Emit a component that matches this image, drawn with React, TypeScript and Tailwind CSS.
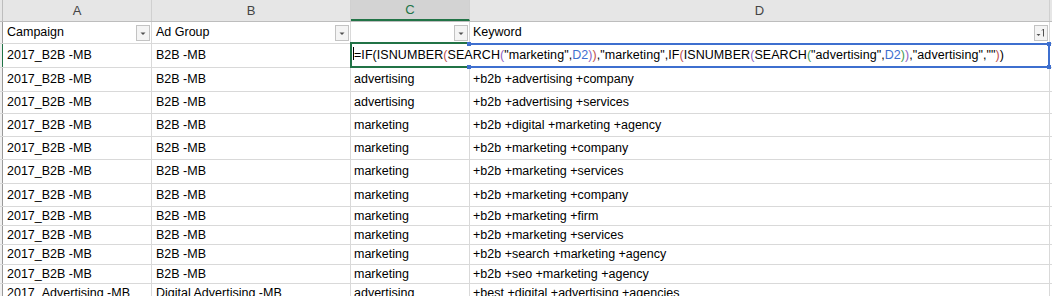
import React from "react";

type Row = { h: string; a: string; b: string; c: string; d: string };

const rows: Row[] = [
  { h: "h-[24px]", a: "2017_B2B -MB", b: "B2B -MB", c: "advertising", d: "+b2b +advertising +company" },
  { h: "h-[22px]", a: "2017_B2B -MB", b: "B2B -MB", c: "advertising", d: "+b2b +advertising +services" },
  { h: "h-[23px]", a: "2017_B2B -MB", b: "B2B -MB", c: "marketing", d: "+b2b +digital +marketing +agency" },
  { h: "h-[23px]", a: "2017_B2B -MB", b: "B2B -MB", c: "marketing", d: "+b2b +marketing +company" },
  { h: "h-[24px]", a: "2017_B2B -MB", b: "B2B -MB", c: "marketing", d: "+b2b +marketing +services" },
  { h: "h-[23px]", a: "2017_B2B -MB", b: "B2B -MB", c: "marketing", d: "+b2b +marketing +company" },
  { h: "h-[19px]", a: "2017_B2B -MB", b: "B2B -MB", c: "marketing", d: "+b2b +marketing +firm" },
  { h: "h-[19px]", a: "2017_B2B -MB", b: "B2B -MB", c: "marketing", d: "+b2b +marketing +services" },
  { h: "h-[20px]", a: "2017_B2B -MB", b: "B2B -MB", c: "marketing", d: "+b2b +search +marketing +agency" },
  { h: "h-[19px]", a: "2017_B2B -MB", b: "B2B -MB", c: "marketing", d: "+b2b +seo +marketing +agency" },
  { h: "h-[19px]", a: "2017_Advertising -MB", b: "Digital Advertising -MB", c: "advertising", d: "+best +digital +advertising +agencies" },
];

function FilterBtn({ sort = false }: { sort?: boolean }) {
  return (
    <div className="w-[14px] h-[16px] shrink-0 border border-[#c3c3c3] bg-[#f4f4f4] flex items-center justify-center">
      <svg width="12" height="14" viewBox="0 0 12 14">
        {sort ? (
          <>
            <path d="M1.5 8 L5.5 8 L3.5 10 Z" fill="#505050" />
            <path d="M8.5 10.5 V3 M7 4.5 L8.5 3" stroke="#505050" strokeWidth="1" fill="none" />
          </>
        ) : (
          <path d="M3.5 6.5 L8.5 6.5 L6 9 Z" fill="#505050" />
        )}
      </svg>
    </div>
  );
}

const P = ({ c, v }: { c: string; v: string }) => <span className={c}>{v}</span>;

function Formula() {
  const red = "text-[#c0504d]";
  const pur = "text-[#8f5fbf]";
  const grn = "text-[#3d9a52]";
  const blu = "text-[#3e6fcf]";
  return (
    <span className="relative whitespace-nowrap tracking-[0.06px]">
      <span className="absolute left-[-1px] top-[1px] w-px h-[13px] bg-black" />
      =IF(ISNUMBER<P c={red} v="(" />SEARCH<P c={pur} v="(" />"marketing",<P c={blu} v="D2" />
      <P c={pur} v=")" />
      <P c={red} v=")" />,"marketing",IF<P c={red} v="(" />ISNUMBER<P c={pur} v="(" />SEARCH
      <P c={grn} v="(" />"advertising",<P c={blu} v="D2" />
      <P c={grn} v=")" />
      <P c={pur} v=")" />,"advertising",""<P c={red} v=")" />)
    </span>
  );
}

export default function App() {
  const cell = "h-full flex items-center border-r border-[#d9d9d9] whitespace-nowrap overflow-hidden";
  return (
    <div
      className="w-[1052px] h-[296px] overflow-hidden bg-white text-black text-[12.5px] relative"
      style={{ fontFamily: '"Liberation Sans", Arial, sans-serif' }}
    >
      {/* Column headers */}
      <div className="flex h-[22px] bg-[#e6e6e6] border-b border-[#bdbdbd] text-[#444] text-[13px]">
        <div className="w-[3px] h-full border-r border-[#bdbdbd]" />
        <div className="w-[149px] h-full flex items-center justify-center border-r border-[#d0d0d0]">A</div>
        <div className="w-[199px] h-full flex items-center justify-center border-r border-[#d0d0d0]">B</div>
        <div className="w-[119px] h-full flex items-center justify-center border-r border-[#d0d0d0] bg-[#d3d3d3] text-[#217346] border-b-2 border-b-[#217346]">
          C
        </div>
        <div className="w-[580px] h-full flex items-center justify-center border-r border-[#d0d0d0]">D</div>
        <div className="flex-1 h-full" />
      </div>

      {/* Row 1: table headers */}
      <div className="flex h-[22px] border-b border-[#d9d9d9]">
        <div className="w-[3px] h-full border-r border-[#9a9a9a] bg-[#f0f0f0]" />
        <div className={`w-[149px] ${cell} pl-[4px] pr-[1px] justify-between`}>
          <span>Campaign</span>
          <FilterBtn />
        </div>
        <div className={`w-[199px] ${cell} pl-[4px] pr-[1px] justify-between`}>
          <span>Ad Group</span>
          <FilterBtn />
        </div>
        <div className={`w-[119px] ${cell} pr-[1px] justify-end`}>
          <FilterBtn />
        </div>
        <div className={`w-[580px] ${cell} pl-[3px] pr-[1px] justify-between`}>
          <span>Keyword</span>
          <FilterBtn sort />
        </div>
        <div className="flex-1 h-full" />
      </div>

      {/* Row 2: formula being edited */}
      <div className="flex h-[24px] border-b border-[#d9d9d9] relative">
        <div className="w-[3px] h-full border-r border-[#217346] bg-[#f0f0f0]" />
        <div className={`w-[149px] ${cell} pl-[4px]`}>2017_B2B -MB</div>
        <div className={`w-[199px] ${cell} pl-[4px]`}>B2B -MB</div>
        <div className="w-[119px] h-full flex items-center pl-[3px] overflow-visible relative z-20">
          <Formula />
        </div>
        <div className="w-[580px] h-full border-r border-[#d9d9d9]" />
        <div className="flex-1 h-full" />
        {/* active cell border */}
        <div className="absolute z-10 left-[350px] top-[-2px] w-[119px] h-[26px] border-2 border-r-0 border-[#217346] pointer-events-none" />
        {/* referenced range border */}
        <div className="absolute z-10 left-[469px] top-[-1px] w-[581px] h-[25px] border-2 border-l-0 border-[#3e6fcf] pointer-events-none">
          <div className="absolute left-[-2px] top-[-3px] w-[4px] h-[4px] bg-[#3e6fcf]" />
          <div className="absolute right-[-3px] top-[-3px] w-[4px] h-[4px] bg-[#3e6fcf]" />
          <div className="absolute left-[-2px] bottom-[-3px] w-[4px] h-[4px] bg-[#3e6fcf]" />
          <div className="absolute right-[-3px] bottom-[-3px] w-[4px] h-[4px] bg-[#3e6fcf]" />
        </div>
      </div>

      {rows.map((r, i) => (
        <div key={i} className={`flex ${r.h} border-b border-[#d9d9d9]`}>
          <div className="w-[3px] h-full border-r border-[#9a9a9a] bg-[#f0f0f0]" />
          <div className={`w-[149px] ${cell} pl-[4px]`}>{r.a}</div>
          <div className={`w-[199px] ${cell} pl-[4px]`}>{r.b}</div>
          <div className={`w-[119px] ${cell} pl-[3px]`}>{r.c}</div>
          <div className={`w-[580px] ${cell} pl-[3px]`}>{r.d}</div>
          <div className="flex-1 h-full" />
        </div>
      ))}
    </div>
  );
}
